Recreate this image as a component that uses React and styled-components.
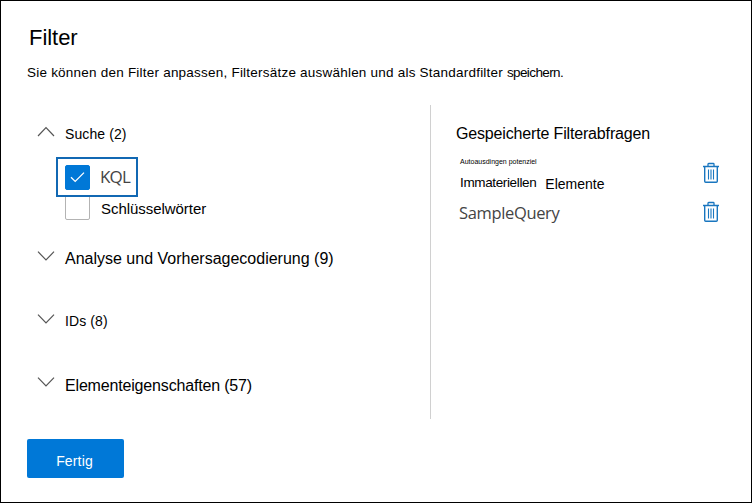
import React, { useState } from "react";
import styled, { createGlobalStyle } from "styled-components";

const GlobalStyle = createGlobalStyle`
  *, *::before, *::after { box-sizing: border-box; }
  body { margin: 0; background: #fff; }
`;

const Panel = styled.main`
  width: 752px;
  height: 503px;
  border: 1px solid #000;
  padding: 23px 26px 0;
  display: flex;
  flex-direction: column;
  align-items: flex-start;
  overflow: hidden;
  background: #fff;
  color: #000;
  font-family: "Liberation Sans", Arial, sans-serif;
`;

const Title = styled.h1`
  margin: 0 0 0 2px;
  font-size: 22px;
  font-weight: 400;
  line-height: 28px;
  letter-spacing: -0.05px;
`;

const Description = styled.p`
  margin: 11px 0 0;
  font-size: 13.5px;
  line-height: 20px;
  letter-spacing: 0.22px;
  white-space: nowrap;
`;

const Tight = styled.span`
  letter-spacing: -0.62px;
`;

const Columns = styled.div`
  display: flex;
  width: 100%;
  height: 314px;
  margin-top: 22px;
`;

const Groups = styled.section`
  width: 404px;
  padding: 17px 0 0 10px;
  border-right: 1px solid #d0d0d0;
`;

const GroupHeader = styled.button`
  display: flex;
  align-items: flex-start;
  height: 24px;
  margin: ${(p) => p.$gap || 0}px 0 0;
  padding: 0;
  border: 0;
  background: none;
  color: inherit;
  font: inherit;
`;

const Chevron = styled.svg`
  width: 18px;
  height: 12px;
  margin: ${(p) => p.$top || 3}px 10px 0 0;
  fill: none;
  stroke: #555;
  stroke-width: 1.2;
`;

const Label = styled.span`
  font-size: ${(p) => p.$size}px;
  line-height: 24px;
  letter-spacing: ${(p) => p.$spacing || 0}px;
  white-space: nowrap;
`;

const Options = styled.div`
  display: flex;
  flex-direction: column;
  align-items: flex-start;
  padding: 11px 0 0 19px;
`;

const Option = styled.label`
  display: flex;
  align-items: center;
  position: relative;
  height: ${(p) => (p.$selected ? 40 : 24)}px;
  width: ${(p) => (p.$selected ? "82px" : "auto")};
  padding-left: ${(p) => (p.$selected ? 7 : 9)}px;
  margin-top: ${(p) => (p.$selected ? 0 : -2)}px;
  z-index: ${(p) => (p.$selected ? 1 : 0)};
  border: ${(p) => (p.$selected ? "2px solid #1168b3" : "0")};
  background: #fff;
`;

const CheckBox = styled.span`
  display: flex;
  align-items: center;
  justify-content: center;
  width: 25px;
  height: 25px;
  border: 1px solid ${(p) => (p.$checked ? "#0078d7" : "#b3b3b3")};
  border-radius: 2px;
  background: ${(p) => (p.$checked ? "#0078d7" : "#fff")};
`;

const CheckMark = styled.svg`
  width: 15px;
  height: 12px;
  fill: none;
  stroke: #fff;
  stroke-width: 1.3;
`;

const SystemText = styled.span`
  font-family: "Open Sans", "Noto Sans", sans-serif;
  font-size: ${(p) => p.$size}px;
  line-height: 24px;
  letter-spacing: ${(p) => p.$spacing}px;
  margin-left: ${(p) => p.$left || 0}px;
  color: #444;
`;

const OptionText = styled(Label)`
  margin-left: 11px;
  padding-top: 3px;
`;

const Saved = styled.section`
  flex: 1;
  padding: 17px 5px 0 25px;
`;

const SavedTitle = styled.h2`
  margin: 0;
  font-size: 16px;
  font-weight: 400;
  line-height: 24px;
  letter-spacing: -0.16px;
`;

const SavedRow = styled.div`
  display: flex;
  justify-content: space-between;
  align-items: flex-start;
  height: ${(p) => p.$height}px;
  padding-left: ${(p) => p.$left}px;
`;

const QueryName = styled.div`
  display: flex;
  flex-direction: column;
`;

const Note = styled.span`
  margin-top: 11px;
  font-size: 7px;
  line-height: 10px;
  letter-spacing: 0;
  white-space: nowrap;
`;

const Words = styled.div`
  display: flex;
  align-items: flex-start;
  gap: 9px;
  margin-top: 4px;
`;

const LowerLabel = styled(Label)`
  padding-top: 1px;
`;

const DeleteButton = styled.button`
  display: flex;
  margin: ${(p) => p.$top}px 0 0;
  padding: 0;
  border: 0;
  background: none;
`;

const TrashSvg = styled.svg`
  width: 18px;
  height: 22px;
  fill: none;
  stroke: #1976bf;
`;

const DoneButton = styled.button`
  width: 97px;
  height: 39px;
  margin: 20px 0 0;
  padding: 5px 2px 0 0;
  border: 0;
  border-radius: 2px;
  background: #0078d7;
  color: #fff;
  font-family: inherit;
  font-size: 14px;
  line-height: 20px;
  letter-spacing: 0.15px;
`;

function Trash({ top }) {
  return (
    <DeleteButton $top={top} aria-label="Löschen">
      <TrashSvg viewBox="0 0 18 22">
        <path d="M1 4.5h16" strokeWidth="1.5" />
        <path d="M6 4V2.2q0-.7.7-.7h4.6q.7 0 .7.7V4" strokeWidth="1.3" />
        <path d="M2.7 5v14.3q0 1 1 1h10.6q1 0 1-1V5" strokeWidth="1.4" />
        <path d="M6.5 7.5v10M9 7.5v10M11.5 7.5v10" strokeWidth="1.1" />
      </TrashSvg>
    </DeleteButton>
  );
}

function Group({ label, size, spacing, gap, iconTop, open, onClick }) {
  return (
    <GroupHeader $gap={gap} onClick={onClick} aria-expanded={!!open}>
      <Chevron $top={iconTop} viewBox="0 0 18 12">
        <path d={open ? "M1 10 9 1.7 17 10" : "M1 1.7 9 10 17 1.7"} />
      </Chevron>
      <Label $size={size} $spacing={spacing}>{label}</Label>
    </GroupHeader>
  );
}

export default function App() {
  const [kql, setKql] = useState(true);
  return (
    <>
      <GlobalStyle />
      <Panel>
        <Title>Filter</Title>
        <Description>
          Sie können den Filter anpassen, Filtersätze auswählen und als Standardfilter <Tight>speichern.</Tight>
        </Description>
        <Columns>
          <Groups>
            <Group open label="Suche (2)" size={14} spacing={0.1} iconTop={4} />
            <Options>
              <Option $selected onClick={() => setKql(!kql)}>
                <CheckBox $checked={kql}>
                  {kql && (
                    <CheckMark viewBox="0 0 15 12">
                      <path d="M1 6.2 5.2 10.4 14 1.6" />
                    </CheckMark>
                  )}
                </CheckBox>
                <SystemText $size={17} $spacing={-0.8} $left={10}>KQL</SystemText>
              </Option>
              <Option>
                <CheckBox />
                <OptionText $size={15} $spacing={-0.05}>Schlüsselwörter</OptionText>
              </Option>
            </Options>
            <Group label="Analyse und Vorhersagecodierung (9)" size={16} gap={28} iconTop={3} />
            <Group label="IDs (8)" size={14} spacing={0.1} gap={38} iconTop={4} />
            <Group label="Elementeigenschaften (57)" size={16} spacing={-0.17} gap={41} iconTop={2} />
          </Groups>
          <Saved>
            <SavedTitle>Gespeicherte Filterabfragen</SavedTitle>
            <SavedRow $height={55} $left={4}>
              <QueryName>
                <Note>Autoausdingen potenziel</Note>
                <Words>
                  <Label $size={13.5} $spacing={-0.36}>Immateriellen</Label>
                  <LowerLabel $size={14}>Elemente</LowerLabel>
                </Words>
              </QueryName>
              <Trash top={16} />
            </SavedRow>
            <SavedRow $height={24} $left={3}>
              <SystemText $size={16.5} $spacing={-0.35}>SampleQuery</SystemText>
              <Trash top={0} />
            </SavedRow>
          </Saved>
        </Columns>
        <DoneButton>Fertig</DoneButton>
      </Panel>
    </>
  );
}
